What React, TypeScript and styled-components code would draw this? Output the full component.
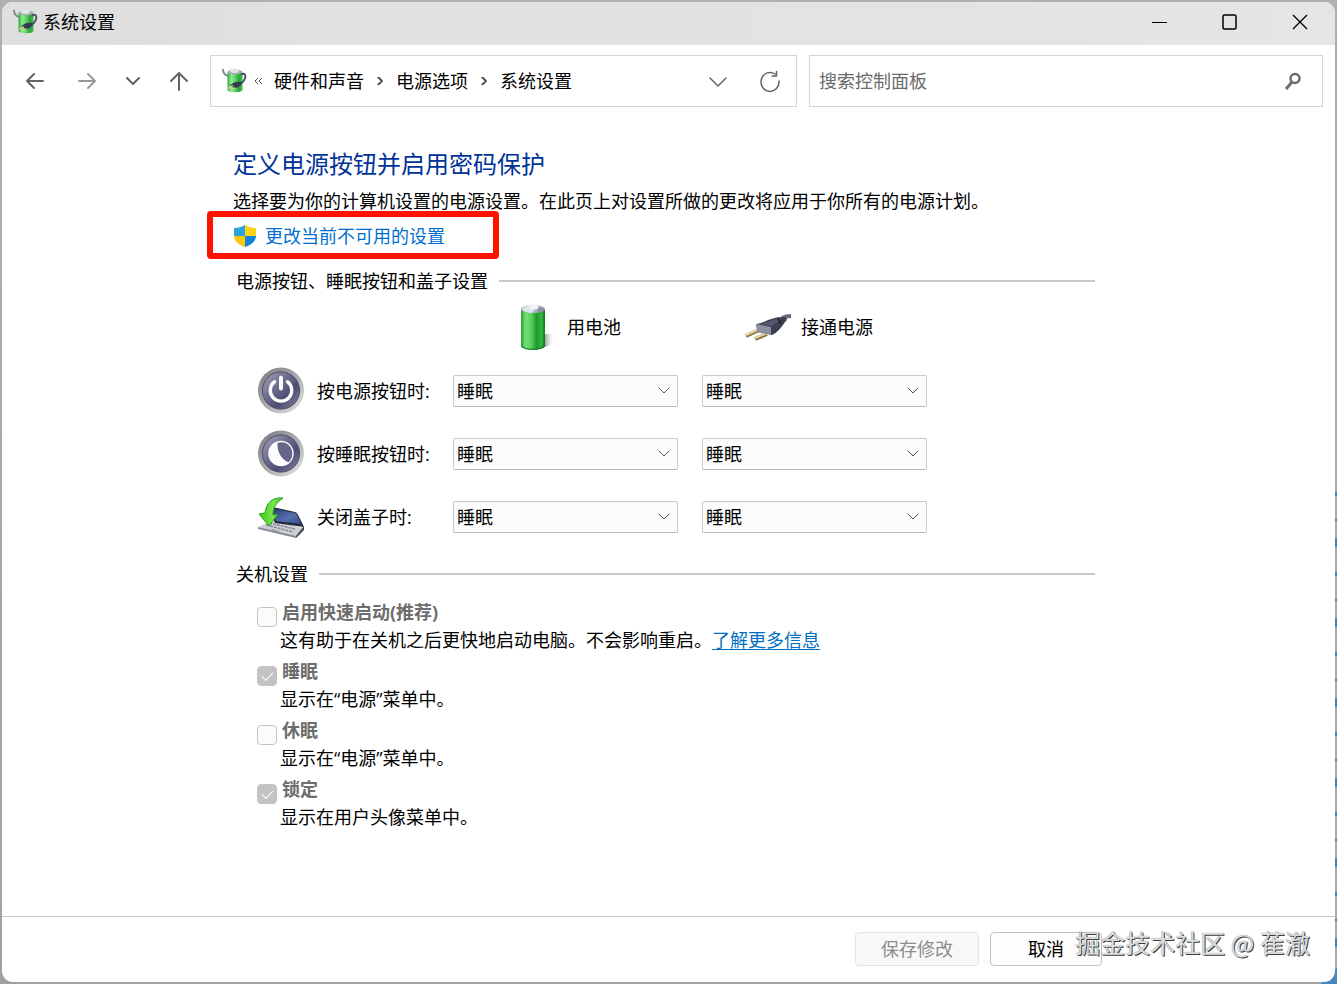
import React, { useId, useState } from "react";
import styled, { createGlobalStyle, css } from "styled-components";

const GlobalStyle = createGlobalStyle`
  *, *::before, *::after { box-sizing: border-box; }
  body {
    margin: 0;
    color: #000;
    font-family: "Open Sans", "Noto Sans CJK SC", sans-serif;
    font-size: 18px;
    line-height: 24px;
  }
  button, input, select { font: inherit; color: inherit; margin: 0; }
  h1, h2, p { margin: 0; font-weight: 400; }
`;

const Desktop = styled.div`
  display: flex;
  min-height: 100vh;
  padding: 2px;
  background:
    linear-gradient(135deg, transparent 50%, #4a86bd 50%) right bottom / 16px 16px no-repeat,
    repeating-linear-gradient(#4a7fae 0 4px, #aaa 4px 27px, #4a7fae 27px 29px, #aaa 29px 46px, #4a7fae 46px 55px, #aaa 55px 80px)
      right bottom / 2px 50% no-repeat,
    linear-gradient(#b0b0b0, #a0a0a0);
`;

const Window = styled.div`
  position: relative;
  display: flex;
  flex: 1;
  flex-direction: column;
  min-width: 0;
  overflow: hidden;
  background: #fff;
  border-radius: 11px;
`;

const TitleBar = styled.header`
  display: flex;
  align-items: center;
  height: 43px;
  padding: 0 0 3px 10px;
  gap: 4px;
  background: linear-gradient(90deg, #dfdfdf, #e5e5e5);
`;

const WindowTitle = styled.span`
  flex: 1;
`;

const WindowControls = styled.div`
  display: flex;
`;

const WindowButton = styled.button`
  display: grid;
  place-items: center;
  width: 70px;
  height: 40px;
  padding: 0;
  border: 0;
  background: none;
`;

const NavBar = styled.nav`
  display: flex;
  align-items: center;
  padding: 10px 12px 10px 7px;
`;

const NavButton = styled.button<{ $narrow?: boolean; $faded?: boolean }>`
  display: grid;
  flex: none;
  place-items: center;
  width: ${(p) => (p.$narrow ? 40 : 52)}px;
  height: 52px;
  padding: 0;
  border: 0;
  background: none;
  color: ${(p) => (p.$faded ? "#999" : "#636363")};
`;

const fieldBox = css`
  display: flex;
  align-items: center;
  min-width: 0;
  height: 52px;
  border: 1px solid #d4d4d4;
`;

const AddressBar = styled.div`
  ${fieldBox}
  flex: 575;
  margin: 0 12px 0 5px;
  padding-left: 10px;
`;

const Crumbs = styled.div`
  display: flex;
  flex: 1;
  align-items: center;
  gap: 12px;
  padding-left: 6px;
  color: #555;
`;

const Crumb = styled.a`
  color: #000;
  text-decoration: none;
  white-space: nowrap;
`;

const SearchBox = styled.label`
  ${fieldBox}
  flex: 483;
  padding: 0 20px 0 9px;
`;

const SearchInput = styled.input`
  flex: 1;
  min-width: 0;
  padding: 0;
  border: 0;
  outline: 0;
  background: none;
  &::placeholder { color: #6a6a6a; opacity: 1; }
`;

const Content = styled.main`
  flex: 1;
  padding: 30px 240px 24px 231px;
`;

const PageTitle = styled.h1`
  color: #003399;
  font-size: 24px;
  line-height: 34px;
`;

const Intro = styled.p`
  margin-top: 8px;
`;

const AdminRow = styled.div`
  position: relative;
  display: flex;
  align-items: center;
  width: 240px;
  height: 24px;
  margin-top: 11px;
  gap: 8px;
`;

const Highlight = styled.span`
  position: absolute;
  inset: -13px -26px -11px -26px;
  border: 6px solid #fd1400;
  border-radius: 4px;
  pointer-events: none;
`;

const AdminLink = styled.a`
  color: #006fd0;
  text-decoration: none;
`;

const InlineLink = styled.a`
  color: #006fc4;
  text-underline-offset: 2px;
`;

const SectionTitle = styled.h2`
  display: flex;
  align-items: center;
  gap: 11px;
  padding-left: 3px;
  font-size: 18px;
  line-height: 24px;
  &::after {
    content: "";
    flex: 1;
    height: 2px;
    background: #c9c9c9;
  }
`;

const ButtonSection = styled.section`
  margin-top: 21px;
`;

const ShutdownSection = styled.section`
  margin-top: 14px;
`;

const SettingsGrid = styled.div`
  display: grid;
  grid-template-columns: 172px 225px 225px;
  grid-template-rows: 62px;
  grid-auto-rows: 63px;
  column-gap: 24px;
  align-items: center;
  padding: 4px 0 0 24px;
`;

const ColumnHead = styled.div<{ $second?: boolean }>`
  display: flex;
  grid-column: ${(p) => (p.$second ? 3 : 2)};
  align-items: center;
  justify-content: center;
  gap: 9px;
  padding-right: ${(p) => (p.$second ? 12 : 0)}px;
  padding-bottom: 2px;
`;

const RowHead = styled.div`
  display: flex;
  align-items: center;
  gap: 12px;
  margin-right: -24px;
  white-space: nowrap;
`;

const SelectWrap = styled.div`
  display: grid;
  align-items: center;
  > * { grid-area: 1 / 1; }
  > svg { justify-self: end; margin-right: 8px; pointer-events: none; color: #555; }
`;

const Select = styled.select`
  width: 100%;
  height: 32px;
  padding: 0 28px 0 3px;
  border: 1px solid #cacaca;
  border-bottom-color: #b8b8b8;
  border-radius: 2px;
  background: #fcfcfc;
  appearance: none;
`;

const OptionList = styled.div`
  display: flex;
  flex-direction: column;
  gap: 7px;
  padding: 15px 0 0 24px;
`;

const OptionLabel = styled.label`
  display: flex;
  align-items: flex-end;
  gap: 5px;
  height: 26px;
  color: #6d6d6d;
  font-weight: 700;
`;

const OptionText = styled.span`
  padding-bottom: 3px;
`;

const OptionNote = styled.p`
  padding-left: 23px;
  line-height: 26px;
`;

const CheckBox = styled.input`
  display: grid;
  place-items: center;
  width: 20px;
  height: 20px;
  border: 1px solid #c4c4c4;
  border-radius: 4px;
  background: #fbfbfb;
  appearance: none;
  &:checked { background: #c3c3c3; }
  &:checked::before {
    content: "";
    width: 11px;
    height: 6px;
    margin-bottom: 3px;
    border: solid #fff;
    border-width: 0 0 1px 1px;
    transform: rotate(-45deg);
  }
`;

const Footer = styled.footer`
  display: flex;
  justify-content: flex-end;
  gap: 11px;
  height: 66px;
  padding: 15px 233px 0 0;
  border-top: 1px solid #c9c9c9;
`;

const FooterButton = styled.button<{ $wide?: boolean }>`
  width: ${(p) => (p.$wide ? 124 : 112)}px;
  height: 34px;
  padding: 0;
  border: 1px solid #c0c0c0;
  border-radius: 4px;
  background: #fdfdfd;
  &:disabled { border-color: #e4e4e4; background: #f8f8f8; color: #8c8c8c; }
`;

const Watermark = styled.span`
  position: absolute;
  right: 25px;
  bottom: 22px;
  color: #dcdcdc;
  font-family: "Noto Sans CJK SC", sans-serif;
  font-size: 25px;
  line-height: 36px;
  white-space: nowrap;
  text-shadow: 1px 1px 0 #3c3c3c, 0 0 1px #777;
  pointer-events: none;
`;

interface LineProps {
  d: string;
  size?: number;
  width?: number;
}

const Line = ({ d, size = 24, width = 2 }: LineProps) => (
  <svg width={size} height={size} viewBox={`0 0 ${size} ${size}`} fill="none" stroke="currentColor" strokeWidth={width} strokeLinecap="round" strokeLinejoin="round" aria-hidden>
    <path d={d} />
  </svg>
);

function PowerIcon() {
  const id = useId();
  return (
    <svg width="27" height="26" viewBox="0 0 27 26" aria-hidden>
      <defs>
        <linearGradient id={id}>
          <stop offset="0" stopColor="#2fa83c" />
          <stop offset=".25" stopColor="#8eea8e" />
          <stop offset=".5" stopColor="#5fd568" />
          <stop offset=".75" stopColor="#2aa337" />
          <stop offset="1" stopColor="#45b552" />
        </linearGradient>
      </defs>
      <path d="M2 1c0 4 1 6 5 7" fill="none" stroke="#7a848c" strokeWidth="1.800" />
      <path d="M6.500 4v18c1 3 14 3 15 0V4z" fill={`url(#${id})`} />
      <ellipse cx="14" cy="4" rx="7.500" ry="2.500" fill="#9fb0ae" />
      <ellipse cx="13.500" cy="2.800" rx="4.500" ry="2.200" fill="#dfe5e8" />
      <path d="M20 6.500c4-2 5 1 4 4s-2 4-5 6" fill="none" stroke="#4b5264" strokeWidth="2" />
      <path d="M9 17c4-3 7-4 12-3-1 4-4 6-8 6z" fill="#363c4e" />
      <path d="M12 17.500l-5 3M14 19.500l-4 2.500" stroke="#e3cf92" strokeWidth="1.400" />
    </svg>
  );
}

const ShieldIcon = () => (
  <svg width="24" height="24" viewBox="0 0 24 24" aria-hidden>
    <path d="M12 1C9 3 5 4 1 4v8h11z" fill="#2ba3df" />
    <path d="M12 1c3 2 7 3 11 3v8H12z" fill="#fcd116" />
    <path d="M1 12c0 5 5 9 11 11V12z" fill="#fdc70a" />
    <path d="M23 12c0 5-5 9-11 11V12z" fill="#1583d8" />
  </svg>
);

const BatteryIcon = () => (
  <svg width="48" height="48" viewBox="0 0 48 48" aria-hidden>
    <defs>
      <linearGradient id="cell">
        <stop offset="0" stopColor="#23a52e" />
        <stop offset=".2" stopColor="#78df79" />
        <stop offset=".45" stopColor="#55cd58" />
        <stop offset=".65" stopColor="#1d9b2a" />
        <stop offset=".85" stopColor="#35b740" />
        <stop offset="1" stopColor="#11761b" />
      </linearGradient>
      <linearGradient id="shade">
        <stop offset="0" stopColor="#777" />
        <stop offset="1" stopColor="#fff" stopOpacity="0" />
      </linearGradient>
    </defs>
    <path d="M33 32c9-3 13 0 11 5-2 5-6 7-11 7z" fill="url(#shade)" />
    <path d="M11 6v37c2 5 22 5 24 0V6z" fill="url(#cell)" />
    <path d="M11 42c2 5 22 5 24 0v1c-2 5-22 5-24 0z" fill="#0c7218" />
    <ellipse cx="23" cy="6" rx="12" ry="4" fill="#a9b2bd" />
    <path d="M12 6c2-4 11-5 15-3l-5 7c-5 0-9-2-10-4z" fill="#dfe3ec" />
    <path d="M19 3c0-3 9-3 9 0v2c-2 2-7 2-9 0z" fill="#f3f3f7" />
    <path d="M27 9l3-5c4 1 5 2 4 3-1 1-3 2-7 2z" fill="#8a89a6" />
  </svg>
);

const PlugIcon = () => (
  <svg width="48" height="48" viewBox="0 0 48 48" aria-hidden>
    <path d="M38 15c4-2 5-2 9-2" stroke="#686b75" strokeWidth="4" fill="none" />
    <path d="M15 27L2 33M23 31l-12 5" stroke="#8c7549" strokeWidth="4" />
    <path d="M15 26L2 32M23 30l-12 5" stroke="#ecd6a0" strokeWidth="2" />
    <path d="M12 21c8-1 17-8 28-7 4 1 3 3 1 5-4 6-8 11-13 13l-14-3z" fill="#3b3f52" />
    <path d="M12 21l15 3v8l-14-3z" fill="#8b8fa1" />
    <path d="M15 21c8-1 17-6 25-6-6 2-8 6-13 8z" fill="#535870" />
    <path d="M34 15l3 6" stroke="#22263a" strokeWidth="2" />
  </svg>
);

function RoundIcon({ children }: { children: React.ReactNode }) {
  const id = useId();
  return (
    <svg width="48" height="48" viewBox="0 0 48 49" aria-hidden>
      <defs>
        <linearGradient id={`${id}r`} x1="0" y1="0" x2="1" y2="1">
          <stop offset="0" stopColor="#77777c" />
          <stop offset=".5" stopColor="#a9a9ad" />
          <stop offset="1" stopColor="#e6e6e6" />
        </linearGradient>
        <linearGradient id={`${id}f`} x1="0" y1="0" x2="1" y2="1">
          <stop offset="0" stopColor="#a6a6bd" />
          <stop offset=".45" stopColor="#66668a" />
          <stop offset=".65" stopColor="#4d4d73" />
          <stop offset="1" stopColor="#8b8ba8" />
        </linearGradient>
      </defs>
      <circle cx="24" cy="24" r="23.500" fill={`url(#${id}r)`} />
      <circle cx="24" cy="24" r="19" fill={`url(#${id}f)`} stroke="#4a4a62" />
      {children}
    </svg>
  );
}

const PowerButtonIcon = () => (
  <RoundIcon>
    <path d="M17.500 15a11 11 0 1 0 13 0" fill="none" stroke="#fff" strokeWidth="3.400" strokeLinecap="round" />
    <path d="M24 11v11" stroke="#fff" strokeWidth="4" strokeLinecap="round" />
  </RoundIcon>
);

const SleepButtonIcon = () => (
  <RoundIcon>
    <circle cx="24" cy="24" r="13" fill="#fff" />
    <path d="M20.500 13C30 10.500 36 17 35.500 25c-.3 4-2 6.500-4 8-7-3-12-11-11-20z" fill="#66668a" />
  </RoundIcon>
);

const LidIcon = () => (
  <svg width="48" height="48" viewBox="0 0 48 48" aria-hidden>
    <defs>
      <linearGradient id="screen" x1="0" y1="0" x2="1" y2="1">
        <stop offset="0" stopColor="#263a78" />
        <stop offset=".6" stopColor="#566fae" />
        <stop offset="1" stopColor="#354b88" />
      </linearGradient>
      <linearGradient id="arrow">
        <stop offset="0" stopColor="#35c916" />
        <stop offset=".6" stopColor="#7ae64b" />
        <stop offset="1" stopColor="#35b51b" />
      </linearGradient>
    </defs>
    <path d="M1 34l13-6 33 7-5 8-3 1z" fill="#cdd0d5" />
    <path d="M1 34l38 9v2L1 36z" fill="#858a92" />
    <path d="M39 43l8-10v4l-8 8z" fill="#42464f" />
    <path d="M12 30l26 6M9 32l27 7" stroke="#858993" strokeWidth="1.500" strokeDasharray="3 1" />
    <path d="M15 36l7 2-4 2-7-2z" fill="#93979f" />
    <path d="M11 13l27 6c3 1 5 7 9 15l-29-4z" fill="#25293a" />
    <path d="M13 15l25 5c2 1 4 6 6 11l-25-3z" fill="url(#screen)" />
    <path d="M26 5C15 4 9 10 8 20l-6 1 10 12 9-12-5 1c0-8 3-12 10-17z" fill="url(#arrow)" stroke="#27a414" />
  </svg>
);

const ACTIONS = ["睡眠", "不采取任何操作", "休眠", "关机"];

const ROWS = [
  { label: "按电源按钮时:", Icon: PowerButtonIcon },
  { label: "按睡眠按钮时:", Icon: SleepButtonIcon },
  { label: "关闭盖子时:", Icon: LidIcon },
];

const OPTIONS = [
  { label: "启用快速启动(推荐)", note: "这有助于在关机之后更快地启动电脑。不会影响重启。", checked: false, more: true },
  { label: "睡眠", note: "显示在“电源”菜单中。", checked: true },
  { label: "休眠", note: "显示在“电源”菜单中。", checked: false },
  { label: "锁定", note: "显示在用户头像菜单中。", checked: true },
];

function ActionSelect({ label }: { label: string }) {
  const [value, setValue] = useState(ACTIONS[0]);
  return (
    <SelectWrap>
      <Select aria-label={label} value={value} onChange={(e) => setValue(e.target.value)}>
        {ACTIONS.map((a) => (
          <option key={a}>{a}</option>
        ))}
      </Select>
      <Line size={12} width={1} d="M1 3l5 5 5-5" />
    </SelectWrap>
  );
}

export default function App() {
  return (
    <Desktop>
      <GlobalStyle />
      <Window>
        <TitleBar>
          <PowerIcon />
          <WindowTitle>系统设置</WindowTitle>
          <WindowControls>
            <WindowButton aria-label="最小化">
              <svg width="16" height="16" stroke="#000"><path d="M0 8.500h15" /></svg>
            </WindowButton>
            <WindowButton aria-label="最大化">
              <svg width="16" height="16" fill="none" stroke="#000" strokeWidth="1.500"><rect x="1" y="1" width="13" height="14" rx="1.500" /></svg>
            </WindowButton>
            <WindowButton aria-label="关闭">
              <svg width="16" height="16" stroke="#000" strokeWidth="1.400"><path d="M1 1l14 14M15 1L1 15" /></svg>
            </WindowButton>
          </WindowControls>
        </TitleBar>

        <NavBar>
          <NavButton aria-label="后退"><Line d="M20 12H4M11 5l-7 7 7 7" /></NavButton>
          <NavButton aria-label="前进" $faded><Line d="M4 12h16M13 5l7 7-7 7" /></NavButton>
          <NavButton aria-label="最近位置" $narrow><Line d="M6 9l6 6 6-6" /></NavButton>
          <NavButton aria-label="向上"><Line d="M12 21V4M4 12l8-8 8 8" /></NavButton>
          <AddressBar>
            <PowerIcon />
            <Crumbs>
              <Line size={8} width={1} d="M4 1L1 4l3 3M8 1L5 4l3 3" />
              <Crumb href="#hardware">硬件和声音</Crumb>
              <Line size={8} width={2} d="M2 0l4 4-4 4" />
              <Crumb href="#power">电源选项</Crumb>
              <Line size={8} width={2} d="M2 0l4 4-4 4" />
              <Crumb href="#system">系统设置</Crumb>
            </Crumbs>
            <NavButton aria-label="以前的位置"><Line width={1.5} d="M4 9l8 8 8-8" /></NavButton>
            <NavButton aria-label="刷新">
              <Line width={1.5} d="M17 5A9 9.500 0 1 0 21 12M18.500 2.500v4.500h-4.500" />
            </NavButton>
          </AddressBar>
          <SearchBox>
            <SearchInput type="search" placeholder="搜索控制面板" aria-label="搜索控制面板" />
            <svg width="18" height="18" fill="none" stroke="#6c6c6c" aria-hidden>
              <circle cx="11" cy="6.500" r="4.500" strokeWidth="2.500" />
              <path d="M8 10l-6 7" strokeWidth="3" />
            </svg>
          </SearchBox>
        </NavBar>

        <Content>
          <PageTitle>定义电源按钮并启用密码保护</PageTitle>
          <Intro>选择要为你的计算机设置的电源设置。在此页上对设置所做的更改将应用于你所有的电源计划。</Intro>
          <AdminRow>
            <ShieldIcon />
            <AdminLink href="#unlock">更改当前不可用的设置</AdminLink>
            <Highlight />
          </AdminRow>

          <ButtonSection>
            <SectionTitle>电源按钮、睡眠按钮和盖子设置</SectionTitle>
            <SettingsGrid>
              <ColumnHead><BatteryIcon />用电池</ColumnHead>
              <ColumnHead $second><PlugIcon />接通电源</ColumnHead>
              {ROWS.map(({ label, Icon }) => (
                <React.Fragment key={label}>
                  <RowHead><Icon />{label}</RowHead>
                  <ActionSelect label={`${label} 用电池`} />
                  <ActionSelect label={`${label} 接通电源`} />
                </React.Fragment>
              ))}
            </SettingsGrid>
          </ButtonSection>

          <ShutdownSection>
            <SectionTitle>关机设置</SectionTitle>
            <OptionList>
              {OPTIONS.map((o) => (
                <div key={o.label}>
                  <OptionLabel>
                    <CheckBox type="checkbox" defaultChecked={o.checked} disabled />
                    <OptionText>{o.label}</OptionText>
                  </OptionLabel>
                  <OptionNote>
                    {o.note}
                    {o.more && <InlineLink href="#more">了解更多信息</InlineLink>}
                  </OptionNote>
                </div>
              ))}
            </OptionList>
          </ShutdownSection>
        </Content>

        <Footer>
          <FooterButton $wide disabled>保存修改</FooterButton>
          <FooterButton>取消</FooterButton>
        </Footer>
        <Watermark>掘金技术社区 @ 萑澈</Watermark>
      </Window>
    </Desktop>
  );
}
